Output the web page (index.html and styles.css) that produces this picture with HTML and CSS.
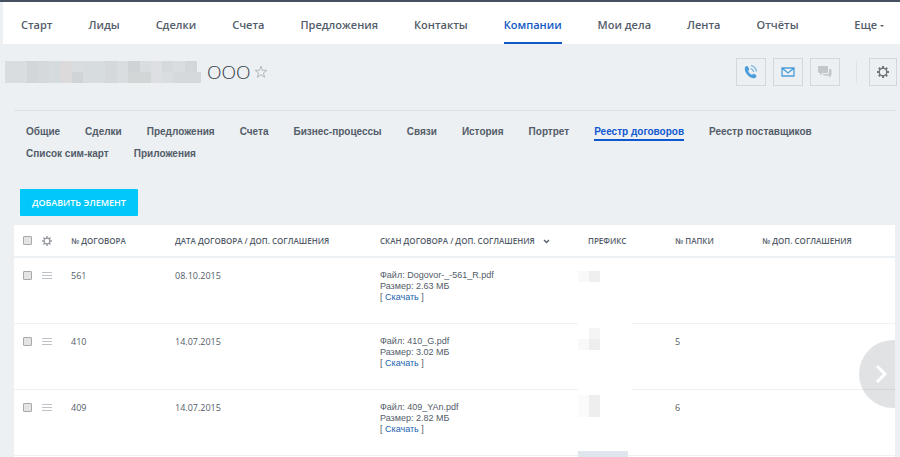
FILE: index.html
```html
<!DOCTYPE html>
<html lang="ru">
<head>
    <meta charset="UTF-8">
    <meta name="viewport" content="width=device-width, initial-scale=1.0">
    <title>Компании</title>
    <link rel="stylesheet" href="styles.css">
</head>

<body>
    <nav class="topnav">
        <a href="#">Старт</a>
        <a href="#">Лиды</a>
        <a href="#">Сделки</a>
        <a href="#">Счета</a>
        <a href="#">Предложения</a>
        <a href="#">Контакты</a>
        <a href="#" class="active">Компании</a>
        <a href="#">Мои дела</a>
        <a href="#">Лента</a>
        <a href="#">Отчёты</a>
        <a href="#" class="more">Еще <span class="caret"></span></a>
    </nav>

    <header class="titlebar">
        <svg class="hidden-name" width="196" height="22" viewBox="0 0 196 22" aria-hidden="true">
            <rect width="196" height="22" fill="#dadddf"/>
            <rect x="22" width="11" height="22" fill="#d3d6d8"/>
            <rect x="33" width="11" height="22" fill="#d6d9db"/>
            <rect x="44" width="12" height="22" fill="#d6dbde"/>
            <rect x="56" width="11" height="22" fill="#dcdadb"/>
            <rect x="67" y="11" width="11" height="11" fill="#d0d4d6"/>
            <rect x="78" width="22" height="22" fill="#d7dcde"/>
            <rect x="100" width="12" height="22" fill="#d5d8da"/>
            <rect x="123" width="12" height="11" fill="#d0d3d5"/>
            <rect x="123" y="11" width="23" height="11" fill="#d3d6d7"/>
            <rect x="146" width="11" height="22" fill="#dddfe2"/>
            <rect x="157" width="11" height="11" fill="#d5d8dc"/>
            <rect x="180" width="12" height="11" fill="#d4d7d9"/>
            <rect x="168" y="11" width="28" height="11" fill="#d6d9db"/>
            <rect x="192" width="4" height="11" fill="#ecf0f2"/>
        </svg>
        <h1>ООО</h1>
        <button class="star" aria-label="В избранное">
            <svg width="14" height="14" viewBox="0 0 14 14"><path d="M7 1.200 8.500 5.300H12.900L9.400 8 10.700 12.300 7 9.700 3.300 12.300 4.600 8 1.100 5.300H5.500Z" fill="none" stroke="#b4b9c0"/></svg>
        </button>
        <div class="actions">
            <button aria-label="Позвонить">
                <svg width="16" height="16" viewBox="0 0 16 16">
                    <path d="M2.200 3.100C3 2 4.300 1.700 4.900 2.500L6.200 5C6.500 5.800 5.300 6.400 5.200 7C5.500 8.400 7.300 10.200 8.800 10.700C9.500 10.700 10 9.400 10.900 9.700L13.200 11.200C13.900 11.900 13.100 13.300 12.200 13.900C10 15 6.500 13.200 4.400 10.700C2.300 8.300 1 5 2.200 3.100Z" fill="#4c9ddb"/>
                    <path d="M7.500 4.500Q10 5 10.700 7.800M8 1.700Q12.500 2.300 13.500 7.500" fill="none" stroke="#6fb0e2" stroke-width="1.200"/>
                </svg>
            </button>
            <button aria-label="Написать письмо">
                <svg width="14" height="10" viewBox="0 0 14 10"><path d="M1 1H13V9H1ZM1 1 7 6 13 1" fill="none" stroke="#4c9ddb" stroke-width="1.300"/></svg>
            </button>
            <button aria-label="Чат">
                <svg width="16" height="14" viewBox="0 0 16 14">
                    <path d="M2 1H10Q11 1 11 2V7Q11 8 10 8H5.500L3 10.500V8H2Q1 8 1 7V2Q1 1 2 1Z" fill="#c4c7c9"/>
                    <path d="M12 4H13.500Q14.500 4 14.500 5V9.500Q14.500 10.500 13.500 10.500V12.800L11 10.500H7Q6 10.500 6 9H11Q12 9 12 8Z" fill="#c4c7c9"/>
                </svg>
            </button>
            <span class="divider"></span>
            <button aria-label="Настройки">
                <svg width="14" height="14" viewBox="0 0 14 14" fill="none" stroke="#71777c">
                    <circle cx="7" cy="7" r="3.800" stroke-width="1.400"/>
                    <path d="M7 1V3M7 11V13M1 7H3M11 7H13M2.800 2.800 4.200 4.200M9.800 9.800 11.200 11.200M2.800 11.200 4.200 9.800M9.800 4.200 11.200 2.800" stroke-width="2"/>
                </svg>
            </button>
        </div>
    </header>

    <nav class="tabs">
        <a href="#">Общие</a>
        <a href="#">Сделки</a>
        <a href="#">Предложения</a>
        <a href="#">Счета</a>
        <a href="#">Бизнес-процессы</a>
        <a href="#">Связи</a>
        <a href="#">История</a>
        <a href="#">Портрет</a>
        <a href="#" class="active">Реестр договоров</a>
        <a href="#">Реестр поставщиков</a>
        <a href="#">Список сим-карт</a>
        <a href="#">Приложения</a>
    </nav>

    <button class="add">ДОБАВИТЬ ЭЛЕМЕНТ</button>

    <main class="grid">
        <table>
            <colgroup>
                <col class="c-check"><col class="c-menu"><col class="c-num"><col class="c-date">
                <col class="c-scan"><col class="c-short"><col class="c-short"><col>
            </colgroup>
            <thead>
                <tr>
                    <th><input type="checkbox" aria-label="Выбрать все"></th>
                    <th>
                        <button class="icon" aria-label="Настроить столбцы">
                            <svg width="10" height="10" viewBox="0 0 14 14" fill="none" stroke="#949a9f">
                                <circle cx="7" cy="7" r="4" stroke-width="1.600"/>
                                <path d="M7 0V3M7 11V14M0 7H3M11 7H14M2 2 4.200 4.200M9.800 9.800 12 12M2 12 4.200 9.800M9.800 4.200 12 2" stroke-width="2"/>
                            </svg>
                        </button>
                    </th>
                    <th>№ ДОГОВОРА</th>
                    <th>ДАТА ДОГОВОРА / ДОП. СОГЛАШЕНИЯ</th>
                    <th>СКАН ДОГОВОРА / ДОП. СОГЛАШЕНИЯ
                        <svg class="sort" width="7" height="5" viewBox="0 0 7 5"><path d="M1 1 3.500 3.500 6 1" fill="none" stroke="#535c69" stroke-width="1.300"/></svg>
                    </th>
                    <th>ПРЕФИКС</th>
                    <th>№ ПАПКИ</th>
                    <th>№ ДОП. СОГЛАШЕНИЯ</th>
                </tr>
            </thead>
            <tbody>
                <tr>
                    <td><input type="checkbox" aria-label="Выбрать 561"></td>
                    <td><button class="icon burger" aria-label="Действия 561"></button></td>
                    <td>561</td>
                    <td>08.10.2015</td>
                    <td class="file">Файл: Dogovor-_-561_R.pdf<br>Размер: 2.63 МБ<br>[ <a href="#">Скачать</a> ]</td>
                    <td class="prefix">
                        <svg width="54" height="66" viewBox="0 0 54 66">
                            <rect y="19" width="11" height="11" fill="#f9f9f9"/><rect x="11" y="19" width="11" height="11" fill="#efefef"/>
                        </svg>
                    </td>
                    <td></td>
                    <td></td>
                </tr>
                <tr>
                    <td><input type="checkbox" aria-label="Выбрать 410"></td>
                    <td><button class="icon burger" aria-label="Действия 410"></button></td>
                    <td>410</td>
                    <td>14.07.2015</td>
                    <td class="file">Файл: 410_G.pdf<br>Размер: 3.02 МБ<br>[ <a href="#">Скачать</a> ]</td>
                    <td class="prefix">
                        <svg width="54" height="66" viewBox="0 0 54 66">
                            <rect width="54" height="10" fill="#fff"/>
                            <rect x="11" y="10" width="11" height="11" fill="#f5f5f5"/><rect y="21" width="11" height="11" fill="#f9f9f9"/><rect x="11" y="21" width="11" height="11" fill="#eee"/>
                        </svg>
                    </td>
                    <td>5</td>
                    <td></td>
                </tr>
                <tr>
                    <td><input type="checkbox" aria-label="Выбрать 409"></td>
                    <td><button class="icon burger" aria-label="Действия 409"></button></td>
                    <td>409</td>
                    <td>14.07.2015</td>
                    <td class="file">Файл: 409_YAn.pdf<br>Размер: 2.82 МБ<br>[ <a href="#">Скачать</a> ]</td>
                    <td class="prefix">
                        <svg width="54" height="73" viewBox="0 0 54 73">
                            <rect width="54" height="10" fill="#fff"/>
                            <rect y="11" width="11" height="22" fill="#fbfbfb"/><rect x="11" y="11" width="11" height="22" fill="#eee"/>
                            <rect y="67" width="50" height="6" fill="#dfe6ee"/>
                        </svg>
                    </td>
                    <td>6</td>
                    <td></td>
                </tr>
            </tbody>
        </table>
        <button class="scroll-right" aria-label="Прокрутить вправо">
            <svg width="12" height="20" viewBox="0 0 12 20"><path d="M2 2 10 10 2 18" fill="none" stroke="#fff" stroke-width="3"/></svg>
        </button>
    </main>
</body>
</html>
```

FILE: styles.css
```css
* {
    box-sizing: border-box;
}

body {
    display: flex;
    flex-direction: column;
    min-height: 100vh;
    margin: 0;
    background-color: #ecf0f2;
    border-top: 2px solid #465061;
    color: #535c69;
    font-family: "Open Sans", "Noto Sans", sans-serif;
    overflow-x: hidden;
}

a {
    color: inherit;
    text-decoration: none;
}

button {
    padding: 0;
    border: none;
    background: none;
    font-family: inherit;
    cursor: pointer;
}

svg {
    display: block;
}

.topnav {
    display: flex;
    gap: 36px;
    height: 42px;
    margin-left: 3px;
    padding: 0 16px 0 18px;
    background-color: #fff;
    font-size: 11px;
    font-weight: 600;
    line-height: 46px;
    white-space: nowrap;
}

.topnav .active {
    color: #1058c4;
    border-bottom: 2px solid #1058c4;
}

.topnav .more {
    margin-left: auto;
}

.caret {
    display: inline-block;
    vertical-align: middle;
    border: 2px solid transparent;
    border-top-color: #535c69;
    border-bottom: none;
}

.titlebar {
    display: flex;
    align-items: center;
    height: 56px;
    margin: 0 3px 10px 5px;
}

h1 {
    margin: 0 3px 0 6px;
    color: #333c48;
    font-size: 19px;
    font-weight: 300;
    line-height: 24px;
}

.actions {
    display: flex;
    align-items: center;
    gap: 7px;
    margin-left: auto;
}

.actions button {
    display: flex;
    align-items: center;
    justify-content: center;
    width: 30px;
    height: 28px;
    border: 1px solid #d3d8dd;
}

.actions button:last-child {
    width: 28px;
}

.divider {
    width: 1px;
    height: 22px;
    margin: 0 5px 0 9px;
    background-color: #dce1e5;
}

.tabs {
    display: flex;
    flex-wrap: wrap;
    gap: 6px 25px;
    margin: 0 4px 0 14px;
    padding: 14px 12px 0;
    border-top: 1px solid #dde3ea;
    font-family: "Liberation Sans", Arial, sans-serif;
    font-size: 10px;
    font-weight: bold;
    line-height: 14px;
}

.tabs a {
    border-bottom: 2px solid transparent;
}

.tabs .active {
    color: #1058d0;
    border-color: #1058d0;
}

.add {
    align-self: flex-start;
    height: 27px;
    margin: 26px 0 9px 20px;
    padding: 0 12px;
    border-radius: 1px;
    background-color: #00c8fa;
    color: #fff;
    font-size: 9px;
    font-weight: 600;
}

.grid {
    position: relative;
    flex: 1;
    margin: 0 5px 0 14px;
    background-color: #fff;
}

table {
    width: 100%;
    table-layout: fixed;
    border-collapse: separate;
    border-spacing: 0;
}

.c-check {
    width: 23px;
}

.c-menu {
    width: 24px;
}

.c-num {
    width: 104px;
}

.c-date {
    width: 205px;
}

.c-scan {
    width: 208px;
}

.c-short {
    width: 87px;
}

th {
    height: 33px;
    padding: 0 0 0 10px;
    border-bottom: 2px solid #eef1f3;
    font-size: 8px;
    font-weight: 600;
    text-align: left;
    white-space: nowrap;
}

td {
    height: 66px;
    padding: 12px 0 0 10px;
    border-bottom: 1px solid #eef0f2;
    font-size: 9px;
    line-height: 11px;
    vertical-align: top;
}

th:first-child,
td:first-child {
    padding-left: 9px;
}

th:nth-child(2),
td:nth-child(2) {
    padding-left: 5px;
}

input[type="checkbox"] {
    appearance: none;
    display: block;
    width: 9px;
    height: 9px;
    margin: 0;
    border: 1px solid #a9a9a9;
    border-radius: 1px;
    background-color: #e4e4e4;
}

td input[type="checkbox"] {
    margin-top: 1px;
}

.icon {
    display: block;
}

.burger {
    width: 10px;
    height: 7px;
    margin-top: 2px;
    border-top: 1px solid #bfc3c7;
    border-bottom: 1px solid #bfc3c7;
    background: linear-gradient(#bfc3c7, #bfc3c7) center / 100% 1px no-repeat;
}

.sort {
    display: inline-block;
    margin-left: 6px;
}

.file {
    font-family: "Liberation Sans", Arial, sans-serif;
}

.file a {
    color: #1662b0;
}

.prefix {
    position: relative;
}

/* covers the row line above the cell */
.prefix svg {
    position: absolute;
    top: -6px;
    left: 0;
}

.scroll-right {
    position: absolute;
    top: 115px;
    right: 0;
    display: flex;
    align-items: center;
    width: 36px;
    height: 68px;
    padding-left: 16px;
    border-radius: 34px 0 0 34px;
    background-color: rgba(83, 92, 105, 0.18);
}
```
